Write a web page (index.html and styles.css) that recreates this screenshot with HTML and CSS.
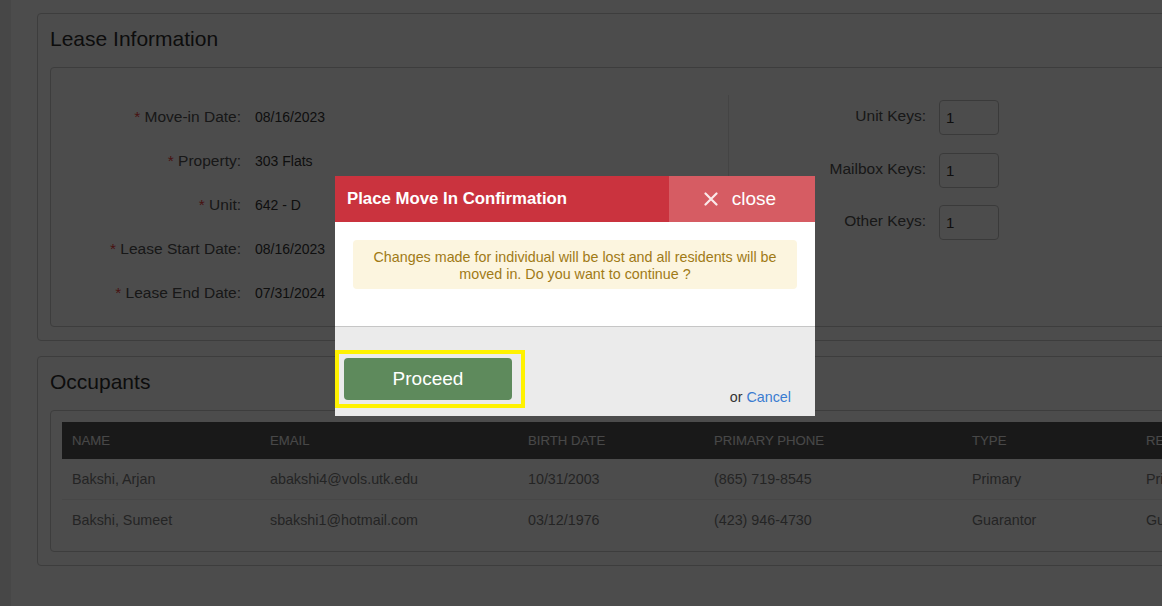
FILE: index.html
```html
<!DOCTYPE html>
<html lang="en">
<head>
    <meta charset="UTF-8">
    <meta name="viewport" content="width=device-width, initial-scale=1.0">
    <title>Move In</title>
    <link rel="stylesheet" href="styles.css">
</head>
<body>
    <div class="page">
        <section class="panel">
            <h2 class="panel-title">Lease Information</h2>
            <div class="panel-body lease">
                <div class="lease-main">
                    <div class="field"><span class="field-label"><span class="req">*</span> Move-in Date:</span><span class="field-value">08/16/2023</span></div>
                    <div class="field"><span class="field-label"><span class="req">*</span> Property:</span><span class="field-value">303 Flats</span></div>
                    <div class="field"><span class="field-label"><span class="req">*</span> Unit:</span><span class="field-value">642 - D</span></div>
                    <div class="field"><span class="field-label"><span class="req">*</span> Lease Start Date:</span><span class="field-value">08/16/2023</span></div>
                    <div class="field"><span class="field-label"><span class="req">*</span> Lease End Date:</span><span class="field-value">07/31/2024</span></div>
                </div>
                <div class="lease-keys">
                    <div class="key-row"><label class="key-label">Unit Keys:</label><input class="key-input" type="text" value="1"></div>
                    <div class="key-row"><label class="key-label">Mailbox Keys:</label><input class="key-input" type="text" value="1"></div>
                    <div class="key-row"><label class="key-label">Other Keys:</label><input class="key-input" type="text" value="1"></div>
                </div>
            </div>
        </section>

        <section class="panel occupants">
            <h2 class="panel-title">Occupants</h2>
            <div class="panel-body table-wrap">
                <table class="grid">
                    <colgroup>
                        <col style="width:198px"><col style="width:258px"><col style="width:186px"><col style="width:258px"><col style="width:174px"><col>
                    </colgroup>
                    <thead>
                        <tr><th>Name</th><th>Email</th><th>Birth Date</th><th>Primary Phone</th><th>Type</th><th>Relationship</th></tr>
                    </thead>
                    <tbody>
                        <tr><td>Bakshi, Arjan</td><td>abakshi4@vols.utk.edu</td><td>10/31/2003</td><td>(865) 719-8545</td><td>Primary</td><td>Primary</td></tr>
                        <tr><td>Bakshi, Sumeet</td><td>sbakshi1@hotmail.com</td><td>03/12/1976</td><td>(423) 946-4730</td><td>Guarantor</td><td>Guarantor</td></tr>
                    </tbody>
                </table>
            </div>
        </section>
    </div>

    <div class="overlay"></div>

    <div class="modal">
        <div class="modal-head">
            <div class="modal-title">Place Move In Confirmation</div>
            <a class="modal-close" href="#">
                <svg width="14" height="14" viewBox="0 0 14 14"><path d="M1.5 1.5 L12.5 12.5 M12.5 1.5 L1.5 12.5" stroke="#fbe9ea" stroke-width="2.2" stroke-linecap="round"/></svg>
                <span>close</span>
            </a>
        </div>
        <div class="modal-body">
            <div class="warning">Changes made for individual will be lost and all residents will be moved in. Do you want to continue ?</div>
        </div>
        <div class="modal-foot">
            <div class="highlight"><button class="btn-proceed">Proceed</button></div>
            <div class="cancel">or <a href="#">Cancel</a></div>
        </div>
    </div>
</body>
</html>
```

FILE: styles.css
```css
html, body {
    margin: 0;
    height: 100%;
    overflow: hidden;
}
body {
    font-family: "Liberation Sans", Arial, sans-serif;
    background-color: #eee;
    color: #333;
}
.page {
    margin-left: 11px;
    min-height: 100%;
    width: 1300px;
    padding: 13px 0 0 26px;
    box-sizing: border-box;
    background-color: #fff;
}
.panel {
    width: 1200px;
    border: 1px solid #ccc;
    border-radius: 4px;
    padding: 12px 12px 13px 12px;
}
.panel + .panel {
    margin-top: 15px;
}
.panel-title {
    margin: 0 0 15px 0;
    font-size: 21px;
    font-weight: normal;
    line-height: 26px;
    color: #2e2e2e;
}
.panel-body {
    border: 1px solid #ccc;
    border-radius: 4px;
}

/* lease */
.lease {
    display: flex;
    padding: 27px 0 11px 0;
}
.lease-main {
    width: 677px;
    border-right: 1px solid #e5e5e5;
}
.field {
    display: flex;
    align-items: center;
    height: 44px;
}
.field-label {
    width: 190px;
    margin-right: 14px;
    text-align: right;
    font-size: 15.5px;
    color: #505050;
}
.req {
    color: #f04040;
}
.field-value {
    font-size: 14px;
    color: #333;
}
.lease-keys {
    padding-top: 5px;
}
.key-row {
    display: flex;
    align-items: center;
    margin-bottom: 17.5px;
}
.key-label {
    width: 197px;
    margin-right: 13px;
    padding-bottom: 3px;
    text-align: right;
    font-size: 15.5px;
    color: #505050;
}
.key-input {
    width: 60px;
    height: 35px;
    box-sizing: border-box;
    padding: 0 6px;
    border: 1px solid #c4c4c4;
    border-radius: 4px;
    font-family: inherit;
    font-size: 15px;
    color: #333;
    background: #fff;
}

/* occupants */
.table-wrap {
    padding: 11px;
}
.grid {
    width: 100%;
    border-collapse: collapse;
    table-layout: fixed;
}
.grid th {
    height: 37px;
    padding: 0 10px;
    background-color: #555;
    color: #f0f0f0;
    font-size: 13.2px;
    font-weight: normal;
    text-align: left;
    text-transform: uppercase;
    white-space: nowrap;
    overflow: hidden;
}
.grid td {
    height: 40px;
    padding: 0 10px;
    font-size: 14.3px;
    color: #7a7a7a;
    white-space: nowrap;
    overflow: hidden;
}
.grid tbody tr + tr td {
    border-top: 1px solid #eee;
}

/* modal */
.overlay {
    position: fixed;
    inset: 0;
    background: rgba(0, 0, 0, 0.7);
}
.modal {
    position: fixed;
    left: 335px;
    top: 176px;
    width: 480px;
    background: #fff;
}
.modal-head {
    display: flex;
    height: 46px;
    background-color: #ca333e;
}
.modal-title {
    flex: 1;
    display: flex;
    align-items: center;
    padding-left: 12px;
    font-size: 16.8px;
    font-weight: bold;
    color: #fff;
}
.modal-close {
    width: 146px;
    display: flex;
    align-items: center;
    justify-content: center;
    gap: 14px;
    background-color: #d65c63;
    color: #fff;
    font-size: 19px;
    text-decoration: none;
    padding-right: 4px;
    box-sizing: border-box;
}
.modal-body {
    padding: 18px 18px 37px 18px;
    border-bottom: 1px solid #c6c6c6;
}
.warning {
    padding: 9px 10px 7px 10px;
    border-radius: 4px;
    background-color: #fcf5df;
    color: #a07a16;
    font-size: 14.3px;
    line-height: 16.5px;
    text-align: center;
}
.modal-foot {
    display: flex;
    justify-content: space-between;
    align-items: flex-end;
    height: 89px;
    box-sizing: border-box;
    padding: 0 24px 8px 0;
    background-color: #ebebeb;
}
.highlight {
    border: 4px solid #fff200;
    padding: 4px 9px 4px 5px;
}
.btn-proceed {
    display: block;
    width: 168px;
    height: 42px;
    border: none;
    border-radius: 4px;
    background-color: #5e8a5c;
    color: #fff;
    font-family: inherit;
    font-size: 19px;
    cursor: pointer;
}
.cancel {
    margin-bottom: 3px;
    font-size: 14.3px;
    line-height: 16px;
    color: #333;
}
.cancel a {
    color: #3a7cd1;
    text-decoration: none;
}
```
